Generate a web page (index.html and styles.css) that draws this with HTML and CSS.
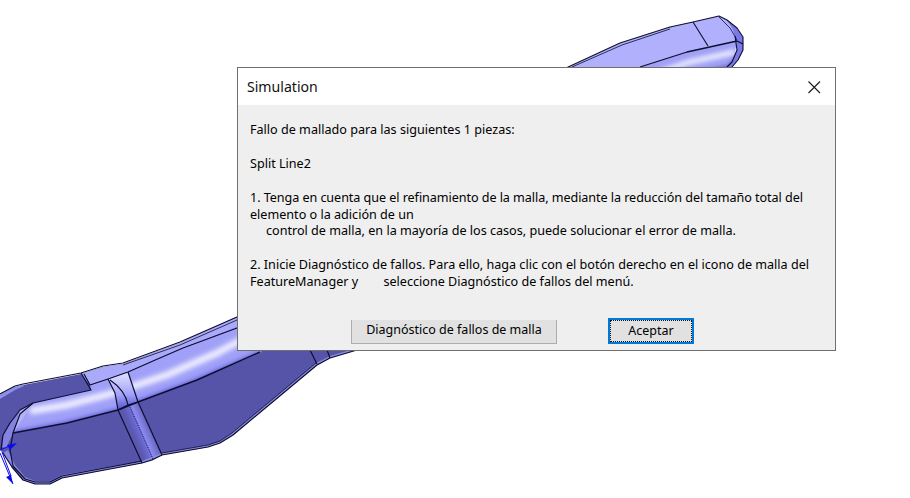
FILE: index.html
```html
<!DOCTYPE html>
<html lang="es">
<head>
<meta charset="utf-8">
<title>Simulation</title>
<link rel="stylesheet" href="styles.css">
</head>
<body>
<div class="stage">
<svg class="model" width="910" height="498" viewBox="0 0 910 498" xmlns="http://www.w3.org/2000/svg">
  <defs>
    <filter id="soft" x="-20%" y="-50%" width="140%" height="200%"><feGaussianBlur stdDeviation="2.6"/></filter>
    <filter id="softer" x="-20%" y="-50%" width="140%" height="200%"><feGaussianBlur stdDeviation="2"/></filter>
    <clipPath id="bandClip">
      <path d="M33 403 L91 390 L90 385 L108 379 L128 372 Q155 360 183 348 L240 326 L262 352 L197 380 L138 402 L118 410 L67 423 L13 433 L20 412 Z"/>
    </clipPath>
    <clipPath id="topClip">
      <path d="M630 72 L640 67 L687 52 L737 41 L734 58 L726 72 Z"/>
    </clipPath>
    <linearGradient id="rib" gradientUnits="userSpaceOnUse" x1="124" y1="436" x2="152" y2="424">
      <stop offset="0" stop-color="#5654a8"/>
      <stop offset="0.3" stop-color="#5a58b0"/>
      <stop offset="0.5" stop-color="#6a68d0"/>
      <stop offset="0.62" stop-color="#8a8af0"/>
      <stop offset="1" stop-color="#5654a8"/>
    </linearGradient>
    <linearGradient id="ribTop" gradientUnits="userSpaceOnUse" x1="122" y1="376" x2="124" y2="408">
      <stop offset="0" stop-color="#d8d8ff"/>
      <stop offset="0.6" stop-color="#a0a0f8"/>
      <stop offset="1" stop-color="#5c5cd0"/>
    </linearGradient>
  </defs>

  <!-- lower body -->
  <path fill="#5654a8" d="M0 395 L15 387 L23 385 L81 374 L103 367 L123 364 L180 343 L237 317 L240 345 L357 350 L330 358 L317 365 L233 435 L220 443 L208 447 L162 455 L142 463 L62 478 L50 484 L35 484 L23 480 L12 467 L3 453 L0 450 Z"/>

  <!-- upper strip beyond the notch -->
  <path fill="#aaaafb" d="M81 374 L103 367 L123 364 L180 343 L240 315 L240 326 L183 348 L128 372 L108 379 L90 385 Z"/>

  <!-- bright band -->
  <g clip-path="url(#bandClip)">
    <rect x="0" y="310" width="280" height="130" fill="#a0a0f8"/>
    <path fill="none" stroke="#f0efff" stroke-width="7" filter="url(#soft)" d="M30 411 L67 405 L110 394 L167 375 L217 353 L245 338"/>
    <path fill="none" stroke="#4c4ccc" stroke-width="8" filter="url(#soft)" d="M13 436 L67 426 L118 413 L138 405 L197 383 L262 355"/>
  </g>

  <!-- nose facet -->
  <path fill="#b4b4f4" d="M33 403 L20 410 L10 423 L13 433 Z"/>
  <path fill="#8484e0" d="M20 410 L10 423 L3 435 L2 447 L6 448 L13 433 Z"/>

  <!-- rib -->
  <path fill="url(#rib)" d="M118 410 L138 402 L162 455 L152 460 L142 463 Z"/>
  <path fill="url(#ribTop)" d="M108 379 L128 372 L138 402 L128 405 L118 410 L115 393 Z"/>

  <!-- rims -->
  <path fill="#8e8ef0" d="M0 395 L15 387 L23 385 L24 386 L15 390 L0 399 Z"/>
  <path fill="#8a8ae4" d="M3 453 L12 467 L23 480 L35 484 L50 484 L62 478 L142 463 L142 461 L62 475 L50 481 L35 481 L25 477 L15 465 L8 450 Z"/>
  <path fill="#8a8ae4" d="M142 463 L162 455 L208 447 L220 443 L233 435 L317 365 L330 358 L357 350 L357 348 L330 356 L316 363 L232 433 L220 441 L208 445 L162 453 L142 461 Z"/>

  <!-- edges -->
  <g fill="none" stroke="#0e0e30" stroke-width="1.2" stroke-linejoin="round">
    <path d="M0 394 L15 386 L23 384 L81 373 L103 366 L123 363 L180 342 L237 317"/>
    <path d="M123 365 L180 345 L237 320" stroke-width="0.8"/>
    <path d="M81 373 L91 390 L33 403 L20 410 L10 423 L3 435 L1 450"/>
    <path d="M84 374 L90 385 L108 379 L128 372 Q155 360 183 348 L237 328"/>
    <path stroke-width="1.4" d="M13 433 L67 423 L118 410 L138 402 L197 380 L260 352"/>
    <path d="M33 403 L20 414 L13 433 L10 450 L13 466 L25 479 L35 482 L50 482 L62 476 L142 461"/>
    <path d="M3 453 L12 467 L23 480 L35 484 L50 484 L62 478 L142 463 L152 460 L162 455 L208 447 L220 443 L233 435 L317 365 L330 358 L357 350"/>
    <path d="M162 453 L208 445 L220 441 L232 433 L316 363" stroke-width="0.8"/>
    <path d="M108 379 L115 393 L118 410 L142 463"/>
    <path d="M110 380 Q125 390 128 405"/>
    <path d="M128 372 L138 402 L162 455"/>
    <path d="M118 410 L128 405 L138 402"/>
    <path d="M310 350 L317 364 M327 350 L330 358"/>
  </g>
  <path fill="none" stroke="#101040" stroke-width="1" stroke-dasharray="1 1" d="M129 405 L153 459"/>

  <!-- upper end -->
  <path fill="#b0b0fc" d="M566 68 L620 43 L670 27 L693 22 L719 16 L727 20 L737 28 L738 42 L640 72 Z"/>
  <g clip-path="url(#topClip)">
    <rect x="620" y="30" width="130" height="50" fill="#a0a0f6"/>
    <path fill="none" stroke="#e4e4ff" stroke-width="6" filter="url(#softer)" d="M660 72 L690 62 L735 52"/>
    <path fill="none" stroke="#5252c0" stroke-width="7" filter="url(#softer)" d="M700 75 L730 69 L738 60"/>
  </g>
  <path fill="#7a7ae6" d="M727 20 L737 28 L743 37 L743 50 L738 60 L732 67 L727 67 L732 62 L737 50 L736 40 L733 30 Z"/>
  <g fill="none" stroke="#0e0e30" stroke-width="1.1" stroke-linejoin="round">
    <path d="M566 68 L620 43 L670 27 L693 22 L719 16 L727 20 L737 28 L743 37 L743 50 L738 60 L732 67"/>
    <path d="M572 67 L622 45 L670 29" stroke-width="0.8"/>
    <path d="M693 22 L708 46"/>
    <path stroke-width="1.3" d="M640 67 L687 52 L737 41 L743 44"/>
    <path d="M735 36 L737 50 L732 62 L727 67"/>
    <path d="M719 17 L730 28 L737 40" stroke-width="0.8"/>
  </g>

  <!-- triad -->
  <path fill="#0a0af0" d="M7 445 L17 443 L10 450 Z"/>
  <path fill="#0a0af0" d="M6 477 L11 475 L13 484 Z"/>
  <path fill="none" stroke="#0a0af0" stroke-width="1" d="M0 453 L13 484 M2 452 L11 476 M0 450 L12 445"/>
</svg>

<div class="dialog">
  <div class="titlebar">
    <span class="title">Simulation</span>
    <svg class="close" width="14" height="14" viewBox="0 0 14 14" xmlns="http://www.w3.org/2000/svg">
      <path d="M1.5 1.5 L13 13 M13 1.5 L1.5 13" fill="none" stroke="#1a1a1a" stroke-width="1.1"/>
    </svg>
  </div>
  <div class="body">
    <div class="message">
      <p>Fallo de mallado para las siguientes 1 piezas:</p>
      <p>Split Line2</p>
      <p><span class="tight">1. Tenga en cuenta que el refinamiento de la malla, mediante la reducción del tamaño total del</span><br>elemento o la adición de un<br><span class="indent">control de malla, en la mayoría de los casos, puede solucionar el error de malla.</span></p>
      <p>2. Inicie Diagnóstico de fallos. Para ello, haga clic con el botón derecho en el icono de malla del<br>FeatureManager y <span class="gap">seleccione Diagnóstico de fallos del menú.</span></p>
    </div>
    <div class="actions">
      <button class="btn btn-secondary" type="button">Diagnóstico de fallos de malla</button>
      <button class="btn btn-primary" type="button"><span class="focus">Aceptar</span></button>
    </div>
  </div>
</div>
</div>
</body>
</html>
```
FILE: styles.css
```css
html, body {
  margin: 0;
  padding: 0;
  background: #fff;
}
.stage {
  position: relative;
  width: 910px;
  height: 498px;
  overflow: hidden;
  font-family: "Noto Sans", "Open Sans", sans-serif;
  color: #000;
}
.model {
  position: absolute;
  left: 0;
  top: 0;
}
.dialog {
  position: absolute;
  left: 237px;
  top: 67px;
  width: 597px;
  height: 282px;
  border: 1px solid #6f6f6f;
  display: flex;
  flex-direction: column;
  background: #efefef;
}
.titlebar {
  height: 37px;
  background: #fff;
  display: flex;
  align-items: center;
  justify-content: space-between;
  padding: 0 14px 0 9px;
  flex: none;
}
.title {
  font-size: 14.1px;
  color: #111;
}
.close {
  display: block;
}
.body {
  flex: 1;
  display: flex;
  flex-direction: column;
  padding: 17px 12px 6px;
}
.message {
  flex: 1;
  font-size: 12.6px;
  line-height: 16.9px;
}
.message p {
  margin: 0 0 16.9px;
}
.tight {
  letter-spacing: -0.06px;
}
.indent {
  padding-left: 16px;
}
.gap {
  padding-left: 22px;
}
.actions {
  display: flex;
  align-items: flex-end;
  gap: 51px;
  padding-left: 101px;
}
.btn {
  font: inherit;
  font-size: 12.5px;
  color: #000;
  padding: 0;
  margin: 0;
  background: #e1e1e1;
  border: 1px solid #adadad;
}
.btn-secondary {
  width: 206px;
  height: 24px;
  padding-bottom: 4px;
  border-top: 0;
}
.btn-primary {
  width: 86px;
  height: 26px;
  border: 2px solid #0078d7;
  padding: 0;
  display: flex;
}
.focus {
  flex: 1;
  border: 1px dotted #111;
  padding-bottom: 1px;
  display: flex;
  align-items: center;
  justify-content: center;
}
```
